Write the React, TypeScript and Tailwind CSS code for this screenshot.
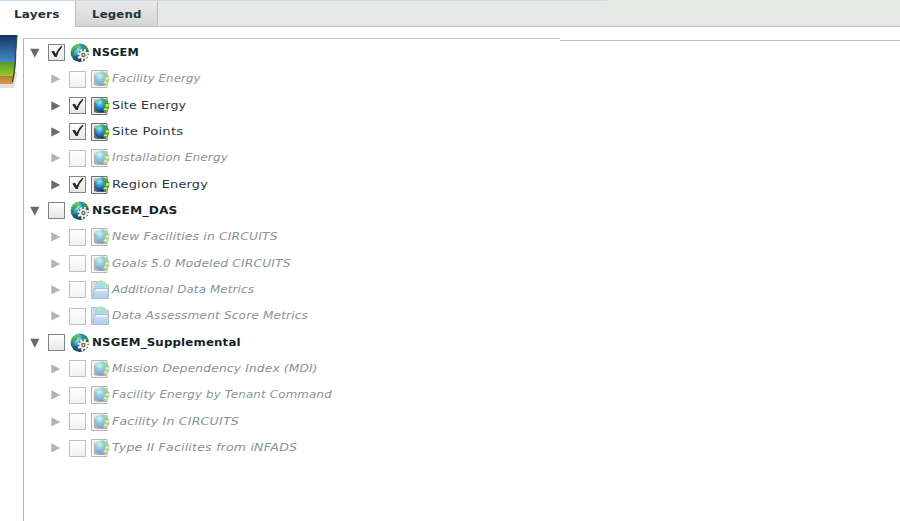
import React from "react";

type Kind = "service" | "layer" | "folder";
type Row = { label: string; kind: Kind; checked?: boolean; width: number };

const rows: Row[] = [
  { label: "NSGEM", kind: "service", checked: true, width: 46.5 },
  { label: "Facility Energy", kind: "layer", width: 89 },
  { label: "Site Energy", kind: "layer", checked: true, width: 74.5 },
  { label: "Site Points", kind: "layer", checked: true, width: 71 },
  { label: "Installation Energy", kind: "layer", width: 116 },
  { label: "Region Energy", kind: "layer", checked: true, width: 96.5 },
  { label: "NSGEM_DAS", kind: "service", width: 85.5 },
  { label: "New Facilities in CIRCUITS", kind: "layer", width: 166 },
  { label: "Goals 5.0 Modeled CIRCUITS", kind: "layer", width: 179 },
  { label: "Additional Data Metrics", kind: "folder", width: 142 },
  { label: "Data Assessment Score Metrics", kind: "folder", width: 196 },
  { label: "NSGEM_Supplemental", kind: "service", width: 149 },
  { label: "Mission Dependency Index (MDI)", kind: "layer", width: 205.5 },
  { label: "Facility Energy by Tenant Command", kind: "layer", width: 220 },
  { label: "Facility In CIRCUITS", kind: "layer", width: 127.5 },
  { label: "Type II Facilites from iNFADS", kind: "layer", width: 185.5 },
];

function Label({ text, width, className }: { text: string; width: number; className: string }) {
  const ref = React.useRef<HTMLSpanElement>(null);
  const [scale, setScale] = React.useState(1);
  React.useLayoutEffect(() => {
    if (ref.current) {
      setScale(width / ref.current.offsetWidth);
    }
  }, [text, width]);
  return (
    <span
      ref={ref}
      className={`inline-block origin-left whitespace-nowrap tracking-[0.15px] ${className}`}
      style={{ transform: `scaleX(${scale})` }}
    >
      {text}
    </span>
  );
}

function Defs() {
  return (
    <svg className="absolute h-0 w-0">
      <defs>
        <radialGradient id="ocean" cx=".36" cy=".3" r=".75">
          <stop offset="0" stopColor="#a3e8f8" />
          <stop offset=".35" stopColor="#35a0d2" />
          <stop offset=".7" stopColor="#1559a0" />
          <stop offset="1" stopColor="#062451" />
        </radialGradient>
        <linearGradient id="land" x1="0" y1="0" x2="0" y2="1">
          <stop offset="0" stopColor="#7bd45c" />
          <stop offset="1" stopColor="#238238" />
        </linearGradient>
        <linearGradient id="folder" x1="0" y1="0" x2="0" y2="1">
          <stop offset="0" stopColor="#9fc6ec" />
          <stop offset="1" stopColor="#6799d4" />
        </linearGradient>
        <linearGradient id="sky" x1="0" y1="0" x2="0" y2="1">
          <stop offset="0" stopColor="#153465" />
          <stop offset="1" stopColor="#438bc5" />
        </linearGradient>
        <linearGradient id="grass" x1="0" y1="0" x2="0" y2="1">
          <stop offset="0" stopColor="#4c952c" />
          <stop offset="1" stopColor="#9acb2e" />
        </linearGradient>
        <linearGradient id="soil" x1="0" y1="0" x2="0" y2="1">
          <stop offset="0" stopColor="#a16c2b" />
          <stop offset="1" stopColor="#d99b4b" />
        </linearGradient>
      </defs>
    </svg>
  );
}

function ServiceIcon() {
  return (
    <svg width="20" height="20" viewBox="0 0 20 20" className="shrink-0">
      <circle cx="9.8" cy="9.8" r="9.2" fill="url(#ocean)" />
      <path d="M1.5 7Q3.5 1.8 8.5 .9L10.5 2.5 7.5 5 6.5 7 4 8 3 11 1.2 10Z" fill="url(#land)" />
      <path d="M11 .9Q16.5 2 18.3 7L15 7 12 5 13 3Z" fill="#2e9e3b" />
      <path d="M3.5 13L6.5 13 8.5 18 5.5 17Z" fill="#21643f" />
      <circle cx="13.4" cy="12" r="4.9" fill="#53604f" />
      <circle cx="13.4" cy="12" r="4.8" fill="none" stroke="#f4f4eb" strokeWidth="2.3" strokeDasharray="1.9 1.87" />
      <circle cx="13.4" cy="12" r="3.1" fill="#626d59" stroke="#f0f0e8" strokeWidth="1.8" />
      <circle cx="13.4" cy="12" r="1" fill="#ddd9a8" />
    </svg>
  );
}

function LayerIcon() {
  return (
    <svg width="20" height="20" viewBox="0 0 20 20" className="shrink-0">
      <path d="M1.5 1.5h15.5v17H1.5z" fill="#ececec" stroke="#6e6e70" />
      <path d="M4 3.5h11v12H4z" fill="#bbb5bd" />
      <path d="M4 6v10l3 1h9V14z" fill="#6b6472" />
      <circle cx="11.7" cy="9.5" r="7.1" fill="url(#ocean)" />
      <path d="M11 2.5Q16 2.2 18 6.2L15.5 7.5 13 5Z" fill="#43a947" />
      <path d="M14.2 8.2L19.3 6.8V11.5L17.5 15 14.5 16 12.8 14 14.6 11.5Z" fill="#57a826" />
      <path d="M15.8 8.3h3v2.3h-3zM14.2 12.6h3v1.5h-3z" fill="#d9ec68" />
      <path d="M6 6Q8 2.7 12 2.9L9.5 5 7 7.5Z" fill="#75d99f" />
    </svg>
  );
}

function FolderIcon() {
  return (
    <svg width="20" height="20" viewBox="0 0 20 20" className="shrink-0">
      <path d="M1.5 1.5h6l2 3h9v14h-17z" fill="#aabcd2" stroke="#77829c" />
      <circle cx="11" cy="7.2" r="6.8" fill="#4eb9d8" />
      <path d="M6 3Q10-1 14 1.5L12 4 8 5ZM13 3L17 5 17.5 9 13 8Z" fill="#6ac878" />
      <path d="M4.3 8.5H19L18 18.5H2.2Z" fill="url(#folder)" stroke="#557eb7" />
      <path d="M6 10h11" stroke="#e8f5fd" strokeWidth="1.5" />
    </svg>
  );
}

function TreeRow({ row }: { row: Row }) {
  const service = row.kind === "service";
  const faded = !service && !row.checked;
  return (
    <div className={`flex h-[26.35px] items-center ${service ? "pl-[5px]" : "pl-[26px]"}`}>
      <svg width="12" height="12" viewBox="0 0 12 12" className="shrink-0" opacity={faded ? 0.5 : 1}>
        <path d={service ? "M1.2 1.8h9.2L5.8 10.8Z" : "M1.3 1.3v9.2L10.3 5.9Z"} fill="#68696a" />
      </svg>
      <span className={`ml-[7px] flex shrink-0 items-center ${faded ? "opacity-50" : ""}`}>
        <span className="relative h-[17px] w-[17px] border border-[#808283] bg-linear-to-b from-white to-[#e6e6e6]">
          {row.checked && (
            <svg width="15" height="15" viewBox="0 0 15 15" className="absolute inset-0">
              <path d="M2.2 6.5L5 5.8 6.7 8.7Q9 3.5 12.5 .8L13.5 1.6Q9.3 6.4 7.7 12H5.8Z" fill="#25282a" />
            </svg>
          )}
        </span>
        <span className={service ? "ml-[5px]" : "ml-1"}>
          {service ? <ServiceIcon /> : row.kind === "folder" ? <FolderIcon /> : <LayerIcon />}
        </span>
      </span>
      <Label
        text={row.label}
        width={row.width}
        className={`ml-[2px] text-[11px] leading-[16px] ${service ? "font-bold text-[#12242a]" : faded ? "italic text-[#889298]" : "text-[#26383f]"}`}
      />
    </div>
  );
}

export default function App() {
  return (
    <div className="flex h-[521px] w-[900px] flex-col overflow-hidden bg-white font-['DejaVu_Sans',sans-serif]">
      <Defs />
      <header className="relative h-[27px] shrink-0 border-b border-[#bcbfbd] bg-[#e7e9e4]">
        <div className="absolute left-0 top-0 h-px w-[607px] bg-[#c7dce5]" />
        <div className="flex">
          <div className="relative z-10 h-[27px] w-[76px] border-r border-t border-r-[#b9bcbc] border-t-[#c7dce5] bg-white pl-[14px]">
            <Label text="Layers" width={46} className="text-[11px] font-bold leading-[26px] text-[#20333c]" />
          </div>
          <div className="h-[26px] w-[82px] border-r border-t border-[#b7b9ba] bg-linear-to-b from-[#e9e9e9] to-[#d5d6d6] pl-[16px]">
            <Label text="Legend" width={49} className="text-[11px] font-bold leading-[23px] text-[#20333c]" />
          </div>
        </div>
      </header>
      <main className="flex min-h-0 flex-1">
        <aside className="w-[23px] shrink-0 pt-[8px]">
          <svg width="20" height="57" viewBox="0 0 20 57">
            <path d="M0 47H14L17 34V41L14 53H0Z" fill="#c9c6c8" opacity=".55" />
            <path d="M0 37H15.5L13 49H0Z" fill="url(#soil)" />
            <path d="M0 26H16L15 41H0Z" fill="url(#grass)" />
            <path d="M0 0H17L16 27H0Z" fill="url(#sky)" />
            <path d="M17 0L16 12 15 17 15.5 25 14 38 12.5 47" fill="none" stroke="#324d45" strokeWidth="1.3" />
          </svg>
        </aside>
        <section className="flex min-w-0 flex-1 flex-col pt-[11px]">
          <div className="flex h-[3px] shrink-0">
            <div className="w-[537px] border-t border-[#c4c6c4]" />
            <div className="flex-1 border-b border-[#bbbdbb]" />
          </div>
          <div className="-mt-[2px] flex-1 border-l border-[#b4b6b4] pt-[0.7px]">
            {rows.map((row) => (
              <TreeRow key={row.label} row={row} />
            ))}
          </div>
        </section>
      </main>
    </div>
  );
}
